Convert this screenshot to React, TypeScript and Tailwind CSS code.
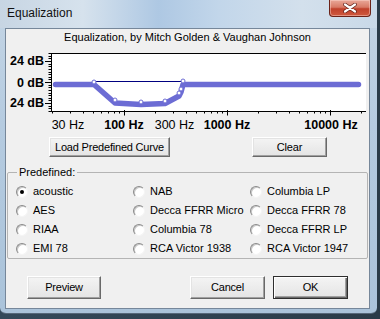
import React from "react";

const CURVE = "#6c6cd4";

const fx = (f: number) => 124 + 103 * Math.log10(f / 100);

const MINOR_FREQS = [
  20, 30, 40, 50, 60, 70, 80, 90, 200, 300, 400, 500, 600, 700, 800, 900, 2000,
  3000, 4000, 5000, 6000, 7000, 8000, 9000, 20000,
];
const MAJOR_FREQS = [100, 1000, 10000];

// control points of the curve (page coords)
const POINTS: [number, number][] = [
  [94, 82],
  [115, 100],
  [141, 102],
  [165, 101],
  [179, 93],
  [181, 89],
  [183, 81],
];

const PRESETS = [
  ["acoustic", "NAB", "Columbia LP"],
  ["AES", "Decca FFRR Micro", "Decca FFRR 78"],
  ["RIAA", "Columbia 78", "Decca FFRR LP"],
  ["EMI 78", "RCA Victor 1938", "RCA Victor 1947"],
];

function Chart() {
  const dbTicks: number[] = [];
  for (let db = -33; db <= 33; db += 3) dbTicks.push(db);
  const dy = (db: number) => 82 - (db * 21) / 24;

  const curve =
    "M55.5 84.5 L94 84.5 L115 103 L141 104.5 L165 103.5 L179 96 L181 92 L183 84.5 L358.5 84.5";

  return (
    <svg width="363" height="86" viewBox="6 45 363 86" className="block">
      <rect x="51" y="53" width="315" height="58" fill="#ffffff" />
      <line x1="51" y1="53.5" x2="366" y2="53.5" stroke="#000" strokeWidth="1" />
      <line x1="51.5" y1="53" x2="51.5" y2="111" stroke="#000" strokeWidth="1" />
      <line x1="51" y1="111.5" x2="366" y2="111.5" stroke="#000" strokeWidth="1" />

      {dbTicks.map((db) => {
        const major = db === 24 || db === 0 || db === -24;
        const y = Math.round(dy(db)) + 0.5;
        return (
          <line
            key={db}
            x1={major ? 45 : 48.5}
            y1={y}
            x2="51"
            y2={y}
            stroke="#000"
            strokeWidth="1"
          />
        );
      })}

      {MINOR_FREQS.map((f) => {
        const x = Math.round(fx(f)) + 0.5;
        return <line key={f} x1={x} y1="111" x2={x} y2="113.5" stroke="#000" strokeWidth="1" />;
      })}
      {MAJOR_FREQS.map((f) => {
        const x = Math.round(fx(f)) + 0.5;
        return <line key={f} x1={x} y1="110" x2={x} y2="115.5" stroke="#000" strokeWidth="1" />;
      })}

      <line x1="94" y1="81.5" x2="183" y2="81.5" stroke="#000080" strokeWidth="1" />
      <path
        d={curve}
        fill="none"
        stroke={CURVE}
        strokeWidth="5.5"
        strokeLinejoin="round"
        strokeLinecap="round"
      />
      {POINTS.map(([x, y], i) => (
        <circle key={i} cx={x} cy={y} r="2" fill="#fff" stroke={CURVE} strokeWidth="1" />
      ))}

      <g fontFamily="Liberation Sans, Arial, sans-serif" fontSize="12.5" fill="#000">
        <text x="44" y="65" textAnchor="end" fontWeight="bold">24 dB</text>
        <text x="44" y="86.5" textAnchor="end" fontWeight="bold">0 dB</text>
        <text x="44" y="107" textAnchor="end" fontWeight="bold">24 dB</text>
        <text x="68" y="129" textAnchor="middle">30 Hz</text>
        <text x="124" y="129" textAnchor="middle" fontWeight="bold">100 Hz</text>
        <text x="174.5" y="129" textAnchor="middle">300 Hz</text>
        <text x="227" y="129" textAnchor="middle" fontWeight="bold">1000 Hz</text>
        <text x="331" y="129" textAnchor="middle" fontWeight="bold">10000 Hz</text>
      </g>
    </svg>
  );
}

function Button({
  children,
  width,
  height,
  isDefault,
}: {
  children: React.ReactNode;
  width: string;
  height: string;
  isDefault?: boolean;
}) {
  return (
    <button
      className={
        isDefault
          ? `${width} ${height} flex items-center justify-center border border-[#2e2e2e] bg-[linear-gradient(#f4f4f4,#e4e4e4)] text-[11px] tracking-[-0.2px] text-black shadow-[inset_1px_1px_0_#ffffff,inset_-1px_-1px_0_#696969,inset_-2px_-2px_0_#a0a0a0]`
          : `${width} ${height} flex items-center justify-center border border-t-[#ffffff] border-l-[#ffffff] border-r-[#696969] border-b-[#696969] bg-[linear-gradient(#f4f4f4,#e4e4e4)] text-[11px] tracking-[-0.2px] text-black shadow-[inset_-1px_-1px_0_#a0a0a0,inset_1px_1px_0_#e3e3e3]`
      }
    >
      {children}
    </button>
  );
}

function Radio({ label, checked }: { label: string; checked?: boolean }) {
  return (
    <div className="flex h-[19px] items-center gap-[5px]">
      <span className="flex h-[12px] w-[12px] shrink-0 items-center justify-center rounded-full border border-t-[#8a8a8a] border-l-[#8a8a8a] border-r-[#f4f4f4] border-b-[#f4f4f4] bg-white shadow-[inset_1px_1px_0_#c8c8c8]">
        {checked && <span className="h-[4px] w-[4px] rounded-full bg-black" />}
      </span>
      <span className="whitespace-nowrap text-[11px] text-black">{label}</span>
    </div>
  );
}

export default function App() {
  return (
    <div className="h-[319px] w-[380px] overflow-hidden bg-[linear-gradient(90deg,#34495a,#2a3b48)] font-['Liberation_Sans',Arial,sans-serif]">
      <div className="flex h-[314px] w-[377px] flex-col rounded-b-[6px] border-b border-b-[#56687a] bg-[linear-gradient(180deg,#c4d5e5_0%,#b5cbe0_40%,#aac3da_100%)]">
        {/* Title bar */}
        <div className="flex h-[28px] shrink-0 items-start justify-between bg-[linear-gradient(90deg,#c7d5e3_0%,#d6e2ed_22%,#aec8e3_42%,#c2d6ea_58%,#d3e0ec_80%,#c9d9e8_100%)]">
          <span className="pl-[7px] pt-[6px] text-[12px] leading-[14px] text-[#111]">
            Equalization
          </span>
          <div className="mr-[6px] flex h-[17px] w-[42px] items-center justify-center rounded-b-[4px] border border-t-0 border-[#6b2218] bg-[linear-gradient(180deg,#e9a899_0%,#d87a66_45%,#c0412b_55%,#cf5a3f_100%)] shadow-[inset_0_0_0_1px_rgba(255,220,210,0.45)]">
            <svg width="14" height="10" viewBox="0 0 14 10">
              <path d="M2 1.5 L12 8.5 M12 1.5 L2 8.5" stroke="#5a1a12" strokeWidth="3.6" strokeLinecap="round" />
              <path d="M2 1.5 L12 8.5 M12 1.5 L2 8.5" stroke="#ffffff" strokeWidth="2.2" strokeLinecap="round" />
            </svg>
          </div>
        </div>

        {/* Client area */}
        <div className="ml-[5px] mr-[7px] flex h-[281px] flex-col border border-[#76879a] bg-[#f0f0f0]">
          <div className="mt-[1px] h-[14px] text-center text-[11px] leading-[14px] text-black">
            Equalization, by Mitch Golden &amp; Vaughan Johnson
          </div>

          <div className="mt-[1px]">
            <Chart />
          </div>

          <div className="ml-[43px] mt-[6px] flex gap-[82px]">
            <Button width="w-[121px]" height="h-[20px]">
              Load Predefined Curve
            </Button>
            <Button width="w-[75px]" height="h-[20px]">
              Clear
            </Button>
          </div>

          <fieldset className="ml-[1px] mt-[8px] w-[357px] rounded-[2px] border border-[#b4b4b4] pb-0">
            <legend className="ml-[9px] px-[2px] text-[11px] leading-[14px] text-black">
              Predefined:
            </legend>
            <div className="grid grid-cols-[117px_117px_117px] pl-[8px] pt-[3px]">
              {PRESETS.map((row, r) =>
                row.map((label, c) => (
                  <Radio key={`${r}-${c}`} label={label} checked={r === 0 && c === 0} />
                ))
              )}
            </div>
          </fieldset>

          <div className="mt-[17px] flex justify-between px-[21px]">
            <Button width="w-[74px]" height="h-[23px]">
              Preview
            </Button>
            <div className="flex gap-[8px]">
              <Button width="w-[75px]" height="h-[23px]">
                Cancel
              </Button>
              <Button width="w-[75px]" height="h-[23px]" isDefault>
                OK
              </Button>
            </div>
          </div>
        </div>
      </div>
    </div>
  );
}
